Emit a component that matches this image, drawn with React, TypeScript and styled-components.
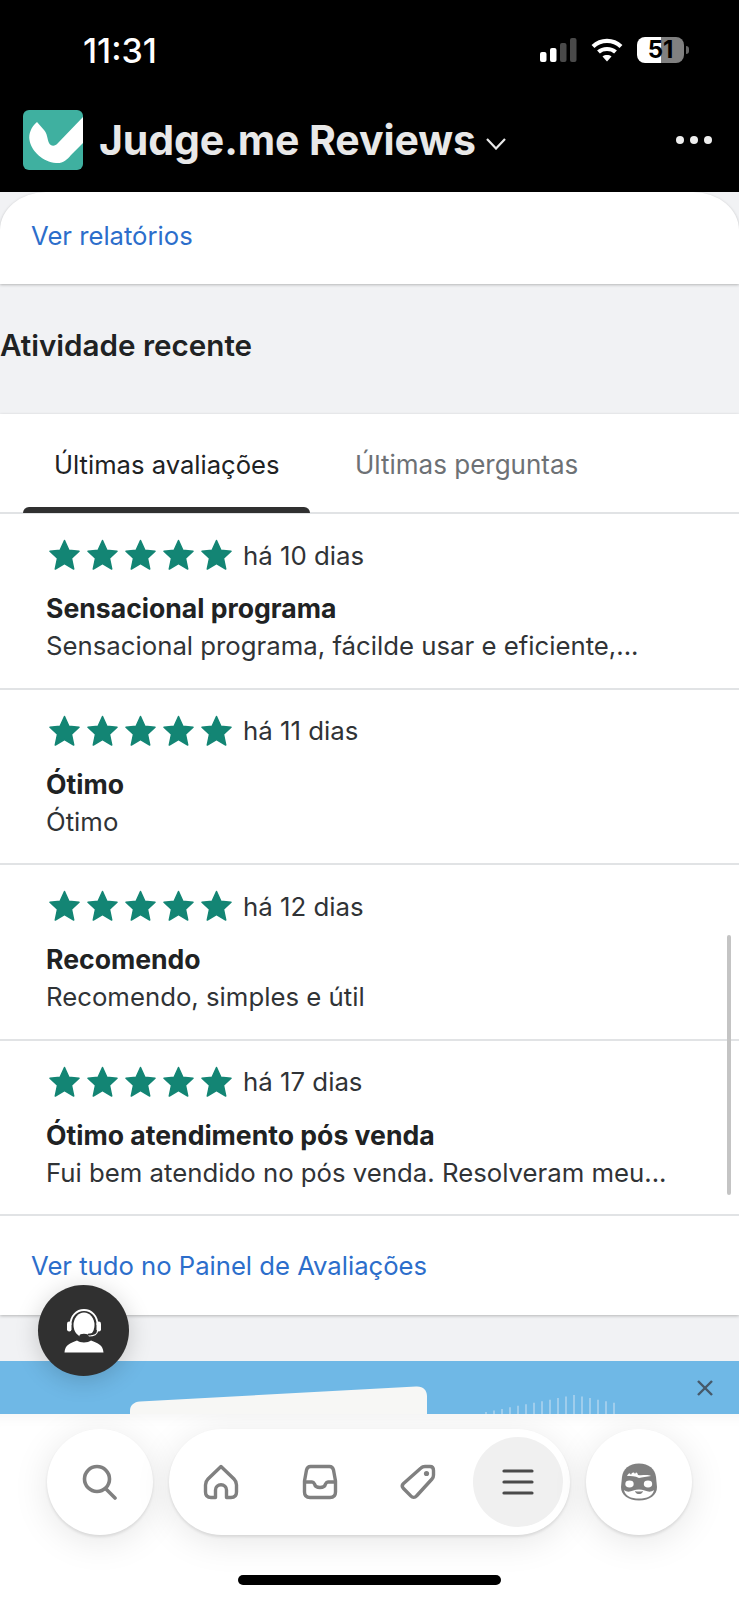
import React from "react";
import styled, { createGlobalStyle } from "styled-components";

const FONT = `Inter, "Liberation Sans", sans-serif`;

const GlobalStyle = createGlobalStyle`
  html, body {
    margin: 0;
    padding: 0;
    background: #000;
  }
  * {
    box-sizing: border-box;
  }
`;

const Page = styled.div`
  position: relative;
  width: 739px;
  height: 1600px;
  overflow: hidden;
  display: flex;
  flex-direction: column;
  background: #f1f2f4;
  font-family: ${FONT};
  color: #202223;
`;

const Dark = styled.header`
  height: 192px;
  flex: none;
  background: #000;
  color: #fff;
  display: flex;
  flex-direction: column;
`;

const StatusBar = styled.div`
  height: 100px;
  display: flex;
  align-items: center;
  padding-left: 83px;
`;

const Time = styled.div`
  font-size: 34px;
  font-weight: 500;
  flex: 1;
`;

const StatusIcons = styled.div`
  display: flex;
  align-items: center;
  margin-right: 55px;
  gap: 14px;
`;

const Battery = styled.div`
  position: relative;
  width: 47px;
  height: 26px;
  border-radius: 8px;
  background: linear-gradient(90deg, #fff 0, #fff 51%, #808080 51%, #808080 100%);
  color: #000;
  font-size: 24px;
  font-weight: 700;
  line-height: 26px;
  text-align: center;

  &::after {
    content: "";
    position: absolute;
    right: -5px;
    top: 9px;
    width: 3px;
    height: 8px;
    border-radius: 0 3px 3px 0;
    background: #666;
  }
`;

const AppBar = styled.div`
  display: flex;
  align-items: center;
  padding: 10px 27px 0 23px;
`;

const Title = styled.div`
  margin-left: 16px;
  font-size: 41px;
  font-weight: 700;
  color: #e8e8e8;
  letter-spacing: -0.1px;
  line-height: 60px;
`;

const Chevron = styled.svg`
  margin: 8px 0 0 10px;
`;

const Dots = styled.div`
  margin-left: auto;
  display: flex;
  gap: 6px;
`;

const Dot = styled.span`
  width: 8px;
  height: 8px;
  border-radius: 50%;
  background: #eee;
`;

const TopCard = styled.section`
  height: 92px;
  flex: none;
  background: #fff;
  border-radius: 46px 46px 0 0 / 38px 38px 0 0;
  padding: 25px 0 0 31px;
  box-shadow: 0 1px 3px rgba(0, 0, 0, 0.25);
`;

const BlueLink = styled.a`
  display: block;
  font-size: 25.65px;
  line-height: 38px;
  color: #2c6ecb;
`;

const SectionTitle = styled.h2`
  height: 130px;
  flex: none;
  margin: 0;
  padding: 0 0 8px 0;
  display: flex;
  align-items: center;
  font-size: 29.6px;
  font-weight: 600;
  color: #202223;
`;

const ActivityCard = styled.section`
  flex: none;
  background: #fff;
  box-shadow: 0 1px 3px rgba(0, 0, 0, 0.25);
`;

const Tabs = styled.div`
  height: 100px;
  display: flex;
  border-bottom: 2px solid #e1e3e5;
  padding-left: 23px;
`;

const Tab = styled.div<{ $active?: boolean }>`
  position: relative;
  width: ${(p) => (p.$active ? "287px" : "auto")};
  margin-left: ${(p) => (p.$active ? "0" : "45px")};
  padding: 31px 0 0 ${(p) => (p.$active ? "31px" : "0")};
  font-size: ${(p) => (p.$active ? "25.6px" : "26px")};
  line-height: 40px;
  color: ${(p) => (p.$active ? "#202223" : "#6d7175")};

  ${(p) =>
    p.$active &&
    `&::after {
      content: "";
      position: absolute;
      left: 0;
      right: 0;
      bottom: -1px;
      height: 6px;
      border-radius: 6px 6px 0 0;
      background: #303030;
    }`}
`;

const ReviewRow = styled.article`
  height: 175.5px;
  border-bottom: 2px solid #e1e3e5;
  padding: 23px 0 0 46px;
`;

const RatingLine = styled.div`
  display: flex;
  align-items: center;
  height: 36px;
  padding-left: 3px;
`;

const Stars = styled.div`
  display: flex;
  gap: 7px;
`;

const Age = styled.span`
  margin-left: 11px;
  font-size: 25.8px;
  color: #303336;
`;

const ReviewTitle = styled.div`
  margin-top: 16px;
  font-size: 26.6px;
  font-weight: 700;
  line-height: 38px;
`;

const ReviewBody = styled.div`
  font-size: 25.75px;
  line-height: 38px;
  color: #303336;
`;

const FooterLink = styled.div`
  height: 99px;
  padding: 31px 0 0 31px;
`;

const Gap = styled.div`
  height: 46px;
  flex: none;
`;

const Banner = styled.div`
  position: relative;
  height: 53px;
  flex: none;
  background: #6fb8e6;
  overflow: hidden;
`;

const BannerArt = styled.svg`
  position: absolute;
  inset: 0;
`;

const BannerClose = styled.svg`
  position: absolute;
  right: 26px;
  top: 19px;
`;

const BottomArea = styled.nav`
  flex: 1;
  background: #fff;
  display: flex;
  flex-direction: column;
  align-items: center;
  padding-top: 15px;
  box-shadow: inset 0 14px 14px -12px rgba(0, 0, 0, 0.05);
`;

const NavRow = styled.div`
  display: flex;
  gap: 16px;
`;

const RoundButton = styled.div`
  width: 106px;
  height: 106px;
  border-radius: 50%;
  background: #fff;
  display: flex;
  align-items: center;
  justify-content: center;
  box-shadow: 0 2px 3px rgba(0, 0, 0, 0.1), 0 6px 36px rgba(0, 0, 0, 0.1);
`;

const Pill = styled.div`
  width: 401px;
  height: 106px;
  border-radius: 53px;
  background: #fff;
  display: flex;
  align-items: center;
  padding-left: 3px;
  box-shadow: 0 2px 3px rgba(0, 0, 0, 0.1), 0 6px 36px rgba(0, 0, 0, 0.1);
`;

const PillItem = styled.div<{ $active?: boolean }>`
  width: ${(p) => (p.$active ? "90px" : "98.5px")};
  height: 90px;
  margin-left: ${(p) => (p.$active ? "5px" : "0")};
  border-radius: 50%;
  flex: none;
  display: flex;
  align-items: center;
  justify-content: center;
  background: ${(p) => (p.$active ? "#f0f0f0" : "transparent")};
`;

const HomeIndicator = styled.div`
  width: 263px;
  height: 10px;
  margin-top: 40px;
  border-radius: 5px;
  background: #000;
`;

const ChatBubble = styled.div`
  position: absolute;
  left: 38px;
  top: 1285px;
  width: 91px;
  height: 91px;
  border-radius: 50%;
  background: #303030;
  display: flex;
  align-items: center;
  justify-content: center;
  box-shadow: 0 4px 24px rgba(0, 0, 0, 0.18);
`;

const ScrollThumb = styled.div`
  position: absolute;
  right: 8px;
  top: 935px;
  width: 4px;
  height: 260px;
  border-radius: 2px;
  background: #c4c4c4;
`;

const reviews = [
  {
    age: "há 10 dias",
    title: "Sensacional programa",
    body: "Sensacional programa, fácilde usar e eficiente,...",
  },
  { age: "há 11 dias", title: "Ótimo", body: "Ótimo" },
  { age: "há 12 dias", title: "Recomendo", body: "Recomendo, simples e útil" },
  {
    age: "há 17 dias",
    title: "Ótimo atendimento pós venda",
    body: "Fui bem atendido no pós venda. Resolveram meu...",
  },
];

// x position and top of each wave line behind the banner card
const waveLines = Array.from({ length: 17 }, (_, i) => {
  const x = 486 + i * 8;
  const peak = 1 - Math.abs(i - 11) / 11;
  return { x, top: 51 - peak * 17 };
});

const Star = () => (
  <svg width="31" height="32" viewBox="0 0 31 32">
    <path
      d="M15.5 1.5 L19.9 11.2 L30 12.3 L22.5 19.3 L24.7 30 L15.5 24.6 L6.3 30 L8.5 19.3 L1 12.3 L11.1 11.2 Z"
      fill="#138574"
      stroke="#138574"
      strokeWidth="1.5"
      strokeLinejoin="round"
    />
  </svg>
);

const Logo = () => (
  <svg width="60" height="60" viewBox="0 0 60 60">
    <rect width="60" height="60" rx="6" fill="#3fb0a0" />
    <path
      d="M14 12 C8 17 5.500 24 6.500 30 C8 41 20 52 33 53 C40 53.500 44 50 48 45 L60 33 V7 L35 33 C32 36.500 28 36.500 26 33 C24 28 24.500 24 21 20 Z"
      fill="#fff"
    />
  </svg>
);

const SignalIcon = () => (
  <svg width="37" height="24" viewBox="0 0 37 24">
    <rect x="0" y="14" width="6.5" height="10" rx="2" fill="#fff" />
    <rect x="10" y="10" width="6.5" height="14" rx="2" fill="#fff" />
    <rect x="20" y="5" width="6.5" height="19" rx="2" fill="#4a4a4a" />
    <rect x="30" y="0" width="6.5" height="24" rx="2" fill="#4a4a4a" />
  </svg>
);

const WifiIcon = () => (
  <svg width="32" height="24" viewBox="0 0 32 24" fill="none" stroke="#fff" strokeWidth="4.2">
    <path d="M2 8.5 C10 1 22 1 30 8.5" />
    <path d="M7.5 14 C12 10 20 10 24.5 14" />
    <path d="M16 23.5 L11.5 18.5 C14 16.6 18 16.6 20.5 18.5 Z" fill="#fff" stroke="none" />
  </svg>
);

const SearchIcon = () => (
  <svg width="36" height="36" viewBox="0 0 36 36" fill="none" stroke="#808080" strokeWidth="3.6" strokeLinecap="round">
    <circle cx="15" cy="15" r="12.5" />
    <path d="M24 25 L33 34" />
  </svg>
);

const HomeIcon = () => (
  <svg width="36" height="36" viewBox="0 0 36 36" fill="none" stroke="#808080" strokeWidth="3.4" strokeLinejoin="round">
    <path d="M18 2.5 L5 15 C3 17 2.5 18.5 2.5 21 V28 C2.5 31.5 4.5 33.5 8 33.5 H12.5 V26 C12.5 23 15 20.8 18 20.8 C21 20.8 23.5 23 23.5 26 V33.5 H28 C31.5 33.5 33.5 31.5 33.5 28 V21 C33.5 18.5 33 17 31 15 Z" />
  </svg>
);

const InboxIcon = () => (
  <svg width="36" height="36" viewBox="0 0 36 36" fill="none" stroke="#808080" strokeWidth="3.4" strokeLinejoin="round" strokeLinecap="round">
    <path d="M8.5 2.5 H27.5 C30 2.5 31 4 31.5 6 L33.5 17 V28 C33.5 31.5 31.5 33.5 28 33.5 H8 C4.5 33.5 2.5 31.5 2.5 28 V17 L4.5 6 C5 4 6 2.5 8.5 2.5 Z" />
    <path d="M3 18 H10 C11.5 18 12 19 12.5 20 C13 22 15 23.5 18 23.5 C21 23.5 23 22 23.5 20 C24 19 24.5 18 26 18 H33" />
  </svg>
);

const TagIcon = () => (
  <svg width="36" height="36" viewBox="0 0 36 36" fill="none" stroke="#808080" strokeWidth="3.4" strokeLinejoin="round">
    <path d="M21 4 C22 3 23 2.5 25 2.5 H30 C32.5 2.5 33.5 4 33.5 6.5 V11 C33.5 13 33 14 32 15 L16.5 32 C15 33.8 12.5 33.8 11 32.2 L3.5 24.5 C2 23 2 21 3.5 19.5 Z" />
    <circle cx="26.5" cy="9.5" r="2.6" fill="#808080" stroke="none" />
  </svg>
);

const MenuIcon = () => (
  <svg width="32" height="28" viewBox="0 0 32 28" stroke="#4a4a4a" strokeWidth="3.2" strokeLinecap="round">
    <path d="M2 3 H30" />
    <path d="M2 14 H30" />
    <path d="M2 25 H30" />
  </svg>
);

const MaskIcon = () => (
  <svg width="38" height="38" viewBox="0 0 38 38">
    <path
      d="M19 0.5 C9 0.5 3 6 2 14 L1 24 C1 32 8 37.5 19 37.5 C30 37.5 37 32 37 24 L36 14 C35 6 29 0.5 19 0.5 Z"
      fill="#808080"
    />
    <path d="M7 13 C9 9 10 10 11 12 C12 9 14 9 15 11 C16 9 17 9 18 12 C22 13 27 11 31 13 C27 14 22 14 19 15 C15 13 11 13 7 13 Z" fill="#fff" />
    <ellipse cx="9.500" cy="21" rx="4.2" ry="3.4" fill="#fff" />
    <ellipse cx="28" cy="21" rx="4.2" ry="3.4" fill="#fff" />
    <path d="M4 27 C9 31 13 26.500 19 26.500 C25 26.500 29 31 34 27 C33 33 27 35.500 19 35.500 C11 35.500 5 33 4 27 Z" fill="#fff" />
    <path d="M15 28 C17 28.800 21 28.800 23 28 C22.500 30.500 20.500 31 19 31 C17.500 31 15.500 30.500 15 28 Z" fill="#808080" />
  </svg>
);

const HeadsetIcon = () => (
  <svg width="40" height="44" viewBox="0 0 40 44">
    <ellipse cx="20" cy="16" rx="10.5" ry="12.5" fill="#fff" />
    <path d="M6.500 16 C6.500 7 12.500 1 20 1 C27.500 1 33.500 7 33.500 16" fill="none" stroke="#fff" strokeWidth="1.8" />
    <rect x="3" y="12.500" width="4.500" height="10" rx="2.2" fill="#fff" />
    <rect x="32.500" y="12.500" width="4.500" height="10" rx="2.2" fill="#fff" />
    <path d="M33.500 22 C33.500 25 30 27 25 27" fill="none" stroke="#fff" strokeWidth="1.2" />
    <path d="M30 23.500 C29 25 27 25.500 24 25.500" fill="none" stroke="#303030" strokeWidth="1.4" />
    <ellipse cx="20" cy="27" rx="4.6" ry="2.2" fill="#303030" />
    <path d="M0.500 43.500 C1 36 6 34 13 31.500 C16 34 24 34 27 31.500 C34 34 39 36 39.500 43.500 Z" fill="#fff" />
  </svg>
);

export default function App(): JSX.Element {
  return (
    <Page>
      <GlobalStyle />
      <Dark>
        <StatusBar>
          <Time>11:31</Time>
          <StatusIcons>
            <SignalIcon />
            <WifiIcon />
            <Battery>51</Battery>
          </StatusIcons>
        </StatusBar>
        <AppBar>
          <Logo />
          <Title>Judge.me Reviews</Title>
          <Chevron width="20" height="12" viewBox="0 0 20 12" fill="none" stroke="#e8e8e8" strokeWidth="2.2">
            <path d="M1 1 L10 10.5 L19 1" />
          </Chevron>
          <Dots>
            <Dot />
            <Dot />
            <Dot />
          </Dots>
        </AppBar>
      </Dark>

      <TopCard>
        <BlueLink>Ver relatórios</BlueLink>
      </TopCard>

      <SectionTitle>Atividade recente</SectionTitle>

      <ActivityCard>
        <Tabs>
          <Tab $active>Últimas avaliações</Tab>
          <Tab>Últimas perguntas</Tab>
        </Tabs>
        {reviews.map((review) => (
          <ReviewRow key={review.age}>
            <RatingLine>
              <Stars>
                {[0, 1, 2, 3, 4].map((i) => (
                  <Star key={i} />
                ))}
              </Stars>
              <Age>{review.age}</Age>
            </RatingLine>
            <ReviewTitle>{review.title}</ReviewTitle>
            <ReviewBody>{review.body}</ReviewBody>
          </ReviewRow>
        ))}
        <FooterLink>
          <BlueLink>Ver tudo no Painel de Avaliações</BlueLink>
        </FooterLink>
      </ActivityCard>

      <Gap />

      <Banner>
        <BannerArt width="739" height="53" viewBox="0 0 739 53">
          <path d="M130 53 V50 C130 44 134 41 140 40.500 L416 25.500 C423 25 427 29 427 35 V53 Z" fill="#f7f7f5" />
          <g stroke="#9fcdec" strokeWidth="2">
            {waveLines.map((line) => (
              <path key={line.x} d={`M${line.x} 53 V${line.top}`} />
            ))}
          </g>
        </BannerArt>
        <BannerClose width="16" height="16" viewBox="0 0 16 16" stroke="#46596a" strokeWidth="2.4">
          <path d="M1 1 L15 15" />
          <path d="M15 1 L1 15" />
        </BannerClose>
      </Banner>

      <BottomArea>
        <NavRow>
          <RoundButton>
            <SearchIcon />
          </RoundButton>
          <Pill>
            <PillItem>
              <HomeIcon />
            </PillItem>
            <PillItem>
              <InboxIcon />
            </PillItem>
            <PillItem>
              <TagIcon />
            </PillItem>
            <PillItem $active>
              <MenuIcon />
            </PillItem>
          </Pill>
          <RoundButton>
            <MaskIcon />
          </RoundButton>
        </NavRow>
        <HomeIndicator />
      </BottomArea>

      <ScrollThumb />
      <ChatBubble>
        <HeadsetIcon />
      </ChatBubble>
    </Page>
  );
}
